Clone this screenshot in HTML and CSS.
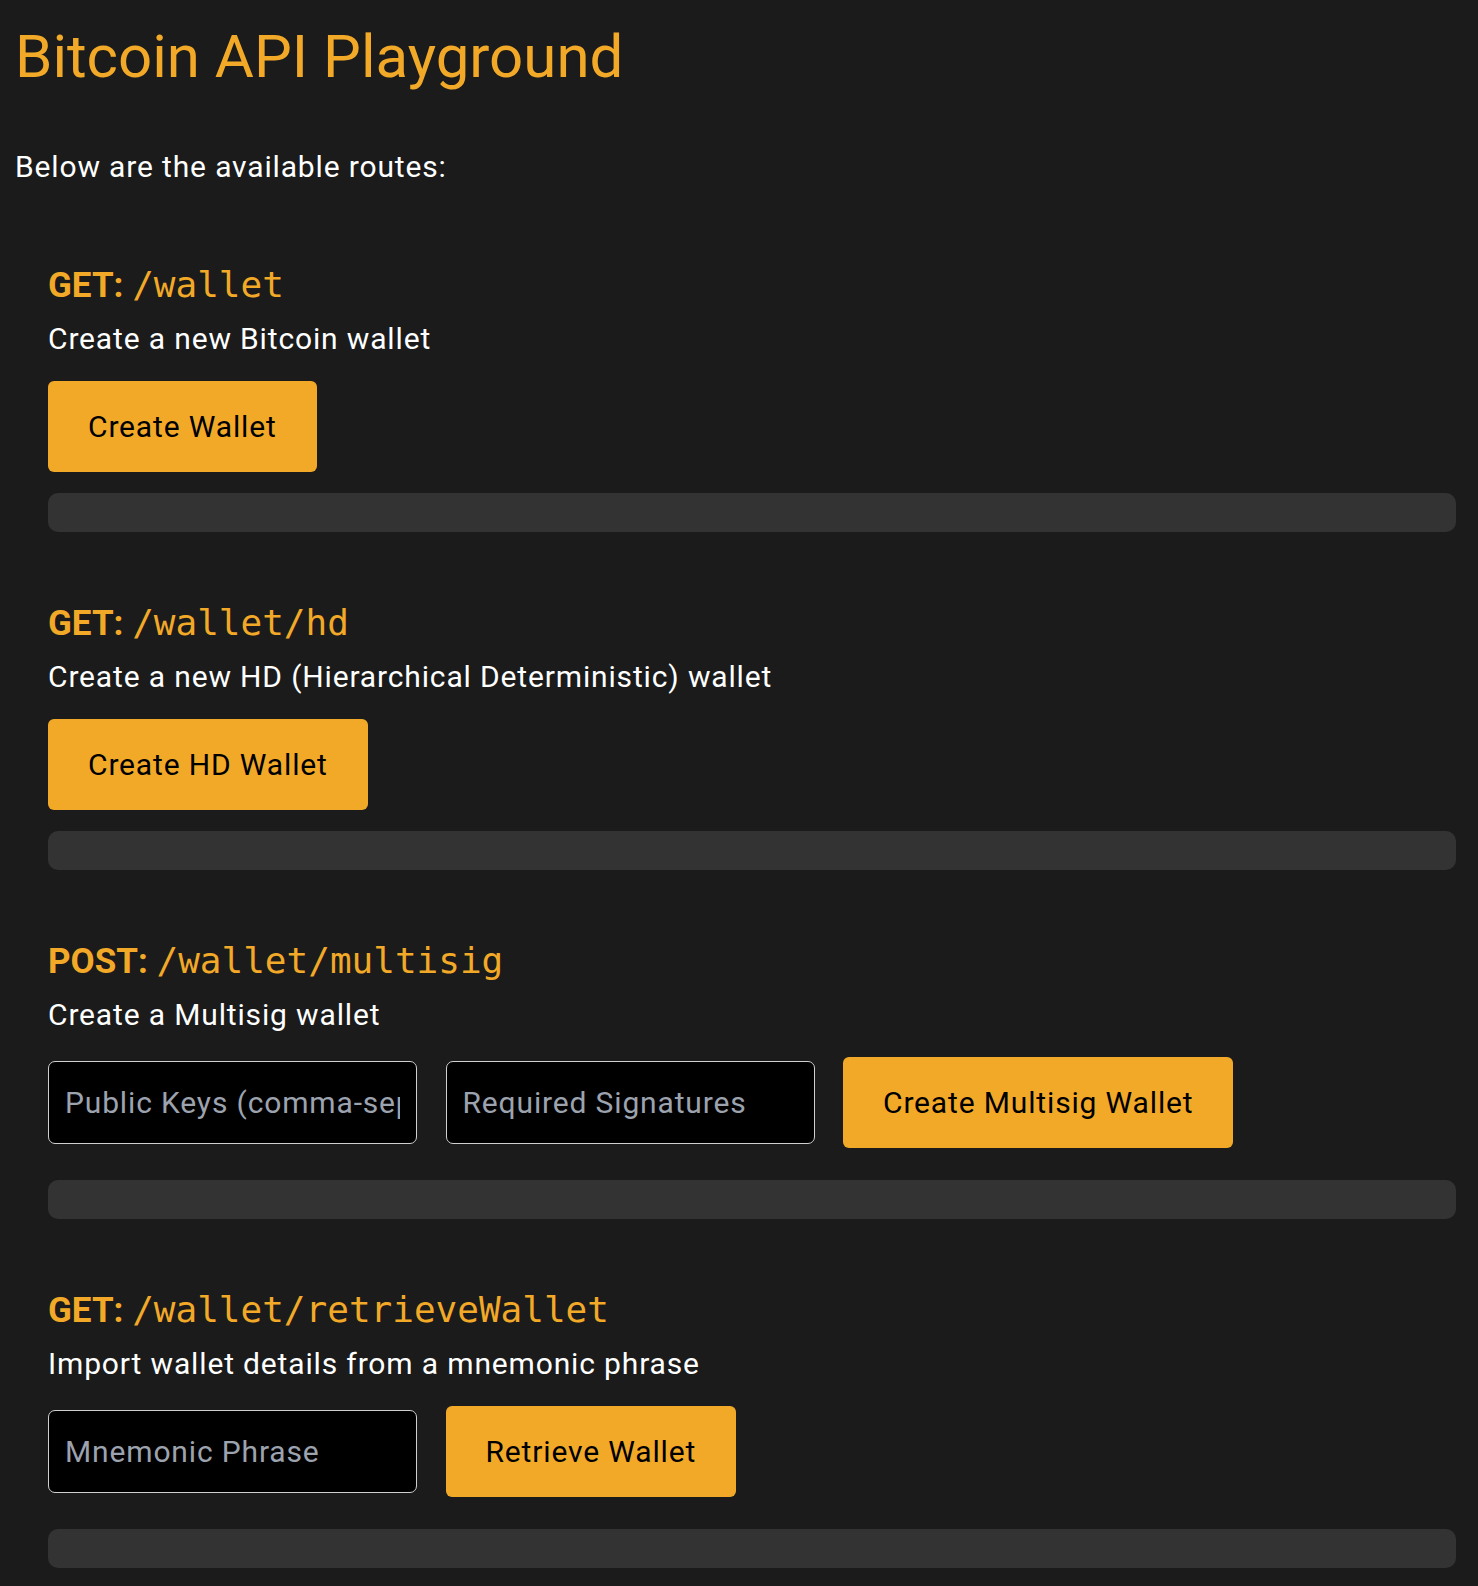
FILE: index.html
```html
<!DOCTYPE html>
<html lang="en">
<head>
<meta charset="utf-8">
<title>Bitcoin API Playground</title>
<link rel="stylesheet" href="styles.css">
</head>
<body>
<h1 class="title">Bitcoin API Playground</h1>
<p class="intro">Below are the available routes:</p>
<div class="routes">
  <section class="route">
    <h3 class="route-head">GET: <code class="path">/wallet</code></h3>
    <p class="desc">Create a new Bitcoin wallet</p>
    <div class="row">
      <button class="btn">Create Wallet</button>
    </div>
    <div class="result"></div>
  </section>
  <section class="route">
    <h3 class="route-head">GET: <code class="path">/wallet/hd</code></h3>
    <p class="desc">Create a new HD (Hierarchical Deterministic) wallet</p>
    <div class="row">
      <button class="btn">Create HD Wallet</button>
    </div>
    <div class="result"></div>
  </section>
  <section class="route">
    <h3 class="route-head">POST: <code class="path">/wallet/multisig</code></h3>
    <p class="desc">Create a Multisig wallet</p>
    <div class="row row-inputs">
      <input class="field" type="text" placeholder="Public Keys (comma-separated)">
      <input class="field" type="text" placeholder="Required Signatures">
      <button class="btn">Create Multisig Wallet</button>
    </div>
    <div class="result"></div>
  </section>
  <section class="route">
    <h3 class="route-head">GET: <code class="path">/wallet/retrieveWallet</code></h3>
    <p class="desc">Import wallet details from a mnemonic phrase</p>
    <div class="row row-inputs">
      <input class="field" type="text" placeholder="Mnemonic Phrase">
      <button class="btn">Retrieve Wallet</button>
    </div>
    <div class="result"></div>
  </section>
</div>
</body>
</html>
```

FILE: styles.css
```css
html, body {
  background: #1b1b1b;
}
body {
  margin: 0;
  padding: 0 15px;
  font-family: Roboto, "Liberation Sans", sans-serif;
  color: #ffffff;
}
.title {
  margin: 22px 0 0;
  font-size: 60px;
  line-height: 70px;
  font-weight: 400;
  color: #f2a928;
}
.intro {
  margin: 57px 0 0;
  font-size: 30px;
  line-height: 36px;
  letter-spacing: 0.85px;
}
.routes {
  display: flex;
  flex-direction: column;
  gap: 70px;
  margin-top: 79px;
}
.route {
  margin: 0 7px 0 33px;
}
.route-head {
  margin: 0;
  font-size: 35px;
  line-height: 41px;
  font-weight: 700;
  color: #f2a928;
}
.path {
  font-family: "DejaVu Sans Mono", "Liberation Mono", monospace;
  font-weight: 400;
  font-size: 36px;
}
.desc {
  margin: 15px 0 0;
  font-size: 30px;
  line-height: 36px;
  letter-spacing: 0.85px;
}
.row {
  display: flex;
  align-items: center;
  gap: 28.5px;
  margin-top: 24px;
}
.row-inputs {
  margin-top: 24px;
  padding-bottom: 11px;
}
.btn {
  font-family: Roboto, "Liberation Sans", sans-serif;
  font-size: 30px;
  line-height: 36px;
  letter-spacing: 0.85px;
  padding: 27.5px 40px;
  border: none;
  border-radius: 6px;
  background: #f2a928;
  color: #000;
}
.field {
  box-sizing: border-box;
  width: 369px;
  height: 83px;
  padding: 0 16px;
  font-family: Roboto, "Liberation Sans", sans-serif;
  font-size: 30px;
  letter-spacing: 0.85px;
  color: #fff;
  background: #000;
  border: 1px solid #d0d0d0;
  border-radius: 7px;
}
.field::placeholder {
  color: #9ca3af;
}
.result {
  margin-top: 21px;
  height: 39px;
  background: #333333;
  border-radius: 10px;
}
```
